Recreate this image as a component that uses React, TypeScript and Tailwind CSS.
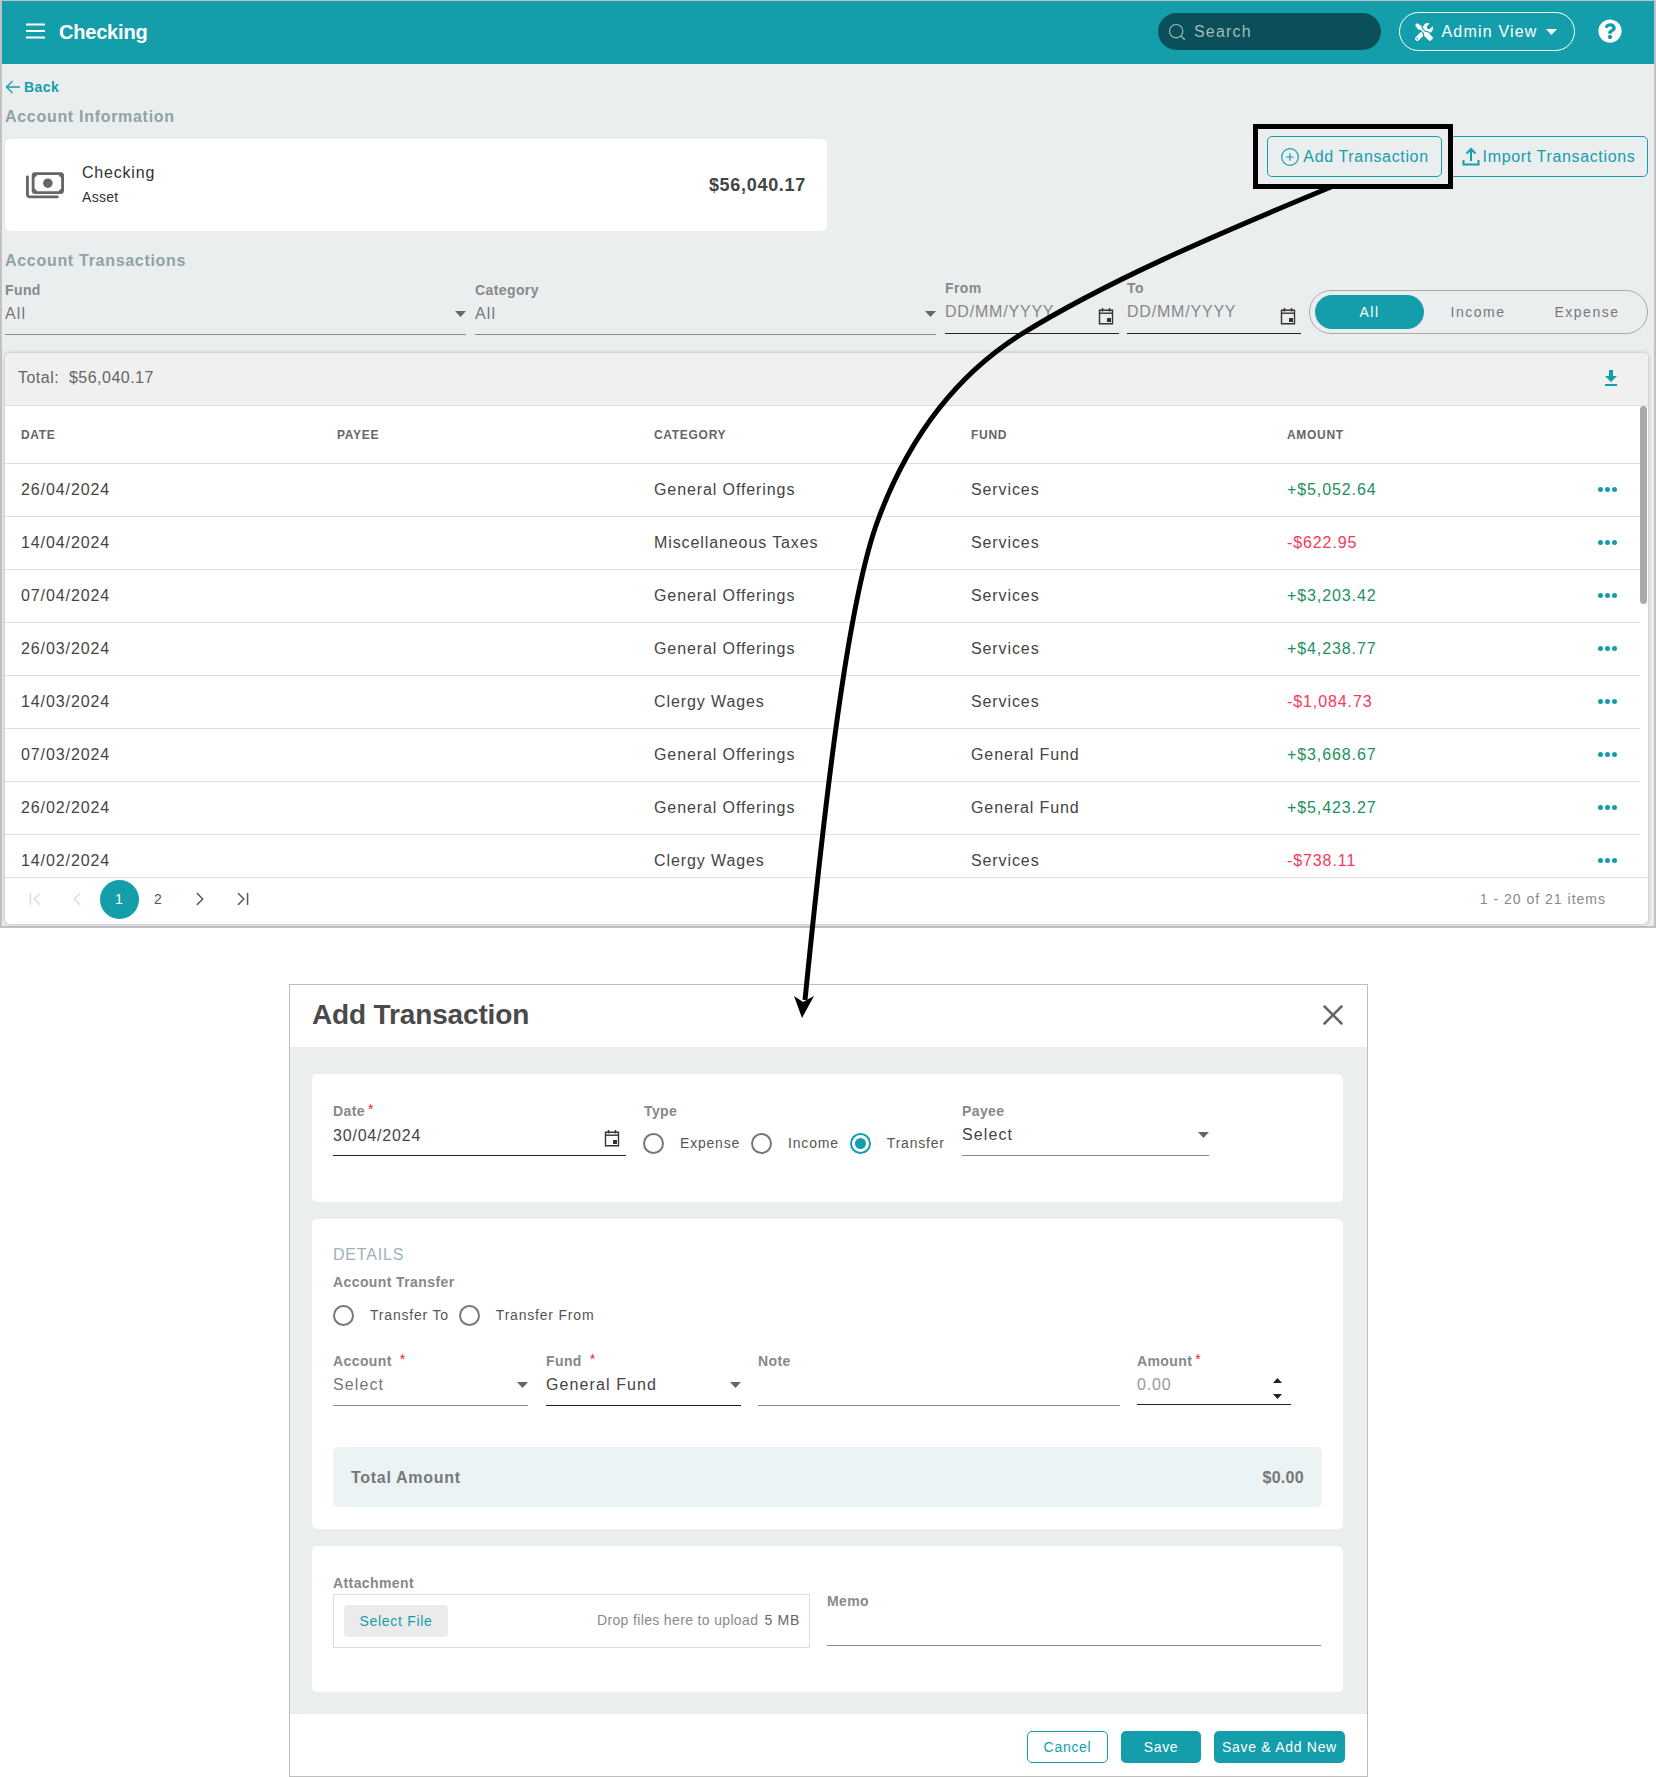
import type React from "react";
import { ChevronFirst, ChevronLast, ChevronLeft, ChevronRight, CirclePlus, Search, X } from "lucide-react";
import { FaQuestionCircle, FaTools } from "react-icons/fa";

interface Transaction {
  date: string;
  category: string;
  fund: string;
  amount: string;
}

const transactions: Transaction[] = [
  { date: "26/04/2024", category: "General Offerings", fund: "Services", amount: "+$5,052.64" },
  { date: "14/04/2024", category: "Miscellaneous Taxes", fund: "Services", amount: "-$622.95" },
  { date: "07/04/2024", category: "General Offerings", fund: "Services", amount: "+$3,203.42" },
  { date: "26/03/2024", category: "General Offerings", fund: "Services", amount: "+$4,238.77" },
  { date: "14/03/2024", category: "Clergy Wages", fund: "Services", amount: "-$1,084.73" },
  { date: "07/03/2024", category: "General Offerings", fund: "General Fund", amount: "+$3,668.67" },
  { date: "26/02/2024", category: "General Offerings", fund: "General Fund", amount: "+$5,423.27" },
  { date: "14/02/2024", category: "Clergy Wages", fund: "Services", amount: "-$738.11" },
];

function Caret({ className = "" }: { className?: string }) {
  return (
    <svg viewBox="0 0 11 6" className={`shrink-0 ${className || "h-[6px] w-[11px]"}`}>
      <path d="M0 0H11L5.5 6Z" fill="currentColor" />
    </svg>
  );
}

function CalendarIcon({ className = "" }: { className?: string }) {
  return (
    <svg width="16" height="18" viewBox="0 0 16 18" className={`shrink-0 text-[#333] ${className}`}>
      <path d="M1.500 3.200h13v13.600h-13z" fill="none" stroke="currentColor" strokeWidth="1.4" />
      <path d="M1 5.500h14v1.400H1z" fill="currentColor" />
      <path d="M4.500 1v3.500M11.500 1v3.500" stroke="currentColor" strokeWidth="1.5" />
      <path d="M9 11h4v4H9z" fill="currentColor" />
    </svg>
  );
}

function MoneyIcon() {
  return (
    <svg width="38" height="27" viewBox="0 0 40 28" className="shrink-0 text-[#666]">
      <path
        d="M9 1.500h28a2 2 0 0 1 1.500 1.500v17a2 2 0 0 1-1.500 1.500H9a2 2 0 0 1-1.500-1.500V3A2 2 0 0 1 9 1.500z"
        fill="none"
        stroke="currentColor"
        strokeWidth="3"
      />
      <path d="M7 1h5a5 5 0 0 1-5 5zM39 1h-5a5 5 0 0 0 5 5zM7 22h5a5 5 0 0 0-5-5zM39 22h-5a5 5 0 0 1 5-5z" fill="currentColor" />
      <circle cx="23" cy="11.500" r="5" fill="currentColor" />
      <path d="M1.500 5v18.500a2.500 2.500 0 0 0 2.500 2.500h29" fill="none" stroke="currentColor" strokeWidth="3" strokeLinecap="round" />
    </svg>
  );
}

function Label({ text, required, wide }: { text: string; required?: boolean; wide?: boolean }) {
  return (
    <div className="flex h-[20px] items-center text-[14px] font-bold tracking-[0.4px] text-[#888]">
      {text}
      {required && <span className={`text-[#e02b2b] ${wide ? "ml-[8px]" : "ml-[3px]"} -mt-[3px] font-normal`}>*</span>}
    </div>
  );
}

function SelectField({
  label,
  value,
  required,
  widthClass,
  muted,
  active,
}: {
  label: string;
  value: string;
  required?: boolean;
  widthClass: string;
  muted?: boolean;
  active?: boolean;
}) {
  return (
    <div className={`shrink-0 ${widthClass}`}>
      <Label text={label} required={required} wide={required} />
      <div
        className={`flex h-[35px] items-center justify-between border-b pb-[7px] text-[16px] tracking-[1.1px] ${
          active ? "border-[#222]" : "border-[#8a8a8a]"
        } ${muted ? "text-[#777]" : "text-[#444]"}`}
      >
        <span>{value}</span>
        <Caret className="h-[6px] w-[11px] text-[#666]" />
      </div>
    </div>
  );
}

function DateField({ label, widthClass }: { label: string; widthClass: string }) {
  return (
    <div className={`mb-[1px] shrink-0 ${widthClass}`}>
      <Label text={label} />
      <div className="flex h-[36px] items-center justify-between border-b border-[#222] pb-[7px] pr-[5px] text-[16px] tracking-[0.05em] text-[#888]">
        <span>DD/MM/YYYY</span>
        <CalendarIcon className="mt-[8px]" />
      </div>
    </div>
  );
}

function Radio({ label, checked }: { label: string; checked?: boolean }) {
  return (
    <div className="flex h-[21px] items-center">
      <span
        className={`flex h-[21px] w-[21px] items-center justify-center rounded-full border-2 ${
          checked ? "border-[#149eac]" : "border-[#777]"
        }`}
      >
        {checked && <span className="h-[11px] w-[11px] rounded-full bg-[#149eac]" />}
      </span>
      <span className="ml-[16px] text-[14px] tracking-[0.8px] text-[#555]">{label}</span>
    </div>
  );
}

function Dots() {
  return (
    <svg width="19" height="5" viewBox="0 0 19 5" className="-mt-[1px] text-[#149eac]">
      <circle cx="2.500" cy="2.500" r="2.500" fill="currentColor" />
      <circle cx="9.500" cy="2.500" r="2.500" fill="currentColor" />
      <circle cx="16.500" cy="2.500" r="2.500" fill="currentColor" />
    </svg>
  );
}

function TransactionRow({ item }: { item: Transaction }) {
  const negative = item.amount.startsWith("-");
  return (
    <div className="grid h-[53px] shrink-0 grid-cols-[316px_317px_317px_316px_1fr_auto] items-center border-b border-[#dedede] pl-[16px] pr-[23px] text-[16px] tracking-[0.9px] text-[#444]">
      <div>{item.date}</div>
      <div />
      <div>{item.category}</div>
      <div>{item.fund}</div>
      <div className={negative ? "text-[#f5395a]" : "text-[#22905c]"}>{item.amount}</div>
      <Dots />
    </div>
  );
}

function OutlineButton({ children, widthClass }: { children: React.ReactNode; widthClass: string }) {
  return (
    <div
      className={`flex h-[41px] items-center justify-center gap-[3px] rounded-[5px] border border-[#149eac] text-[16px] tracking-[0.65px] text-[#149eac] ${widthClass}`}
    >
      {children}
    </div>
  );
}

export default function App() {
  return (
    <div className="relative h-[1777px] w-[1656px] overflow-hidden bg-white font-['Liberation_Sans',Arial,sans-serif]">
      {/* account page */}
      <div className="h-[928px] border-x-2 border-b-2 border-t border-[#c4c0c4] bg-[#ebeeef]">
        <header className="flex h-[63px] items-center justify-between bg-[#149eac] pb-[2px] pl-[24px] pr-[32px] text-white">
          <div className="flex items-center gap-[14px]">
            <svg width="19" height="16" viewBox="0 0 19 16" className="-mt-[2px]">
              <path d="M0 1.500h19M0 8h19M0 14.500h19" stroke="#fff" strokeWidth="2" />
            </svg>
            <span className="text-[20px] font-bold tracking-[-0.2px]">Checking</span>
          </div>
          <div className="flex items-center">
            <div className="flex h-[37px] w-[223px] items-center gap-[7px] rounded-full bg-[#0a4f59] pl-[9px] text-[16px] tracking-[1.2px] text-[#a3bcbc]">
              <Search size={20} strokeWidth={1.4} />
              <span>Search</span>
            </div>
            <div className="ml-[18px] flex h-[39px] w-[176px] items-center justify-center gap-[8px] rounded-full border border-white text-[16px] tracking-[1.2px]">
              <FaTools size={18} className="-ml-[2px]" />
              <span>Admin View</span>
              <Caret />
            </div>
            <FaQuestionCircle size={24} className="-mt-[2px] ml-[23px]" />
          </div>
        </header>

        <div className="pl-[3px] pr-[6px]">
          <div className="mt-[13px] flex h-[20px] items-center text-[14px] font-bold tracking-[0.4px] text-[#149eac]">
            <svg width="16" height="14" viewBox="0 0 16 14" className="mr-[3px]">
              <path d="M15 7H1.500M7.500 1L1.500 7l6 6" fill="none" stroke="currentColor" strokeWidth="1.3" />
            </svg>
            Back
          </div>

          <div className="mt-[9px] flex justify-between">
            <div>
              <div className="flex h-[20px] items-center pt-[1px] text-[16px] font-bold tracking-[0.7px] text-[#8fa3a3]">
                Account Information
              </div>
              <div className="mt-[13px] flex h-[92px] w-[822px] items-center justify-between rounded-[5px] bg-white pl-[21px] pr-[21px]">
                <div className="flex items-center">
                  <MoneyIcon />
                  <div className="-mt-[1px] ml-[18px]">
                    <div className="text-[16px] leading-[20px] tracking-[0.05em] text-[#333]">Checking</div>
                    <div className="mt-[5px] text-[14px] leading-[18px] tracking-[0.3px] text-[#333]">Asset</div>
                  </div>
                </div>
                <div className="text-[18px] font-bold tracking-[0.7px] text-[#444]">$56,040.17</div>
              </div>
            </div>
            <div className="flex gap-[7px] pt-[30px]">
              <OutlineButton widthClass="w-[175px]">
                <CirclePlus size={20} strokeWidth={1.4} />
                Add Transaction
              </OutlineButton>
              <OutlineButton widthClass="w-[199px]">
                <svg width="18" height="19" viewBox="0 0 18 19" fill="none" stroke="currentColor" strokeWidth="2">
                  <path d="M9 14V2M4.500 6.500L9 2l4.500 4.500M1.500 13v4.500h15V13" />
                </svg>
                Import Transactions
              </OutlineButton>
            </div>
          </div>

          <div className="mt-[19px] flex h-[20px] items-center pt-[1px] text-[16px] font-bold tracking-[0.7px] text-[#8fa3a3]">
            Account Transactions
          </div>
          <div className="mt-[10px] flex h-[55px] items-end">
            <SelectField label="Fund" value="All" widthClass="w-[461px]" muted />
            <SelectField label="Category" value="All" widthClass="ml-[9px] w-[461px]" muted />
            <DateField label="From" widthClass="ml-[9px] w-[174px]" />
            <DateField label="To" widthClass="ml-[8px] w-[174px]" />
            <div className="mb-[1px] ml-[8px] flex h-[44px] w-[339px] items-center rounded-full border border-[#aaa] pl-[5px] text-[14px] tracking-[1.5px] text-[#777]">
              <div className="flex h-[34px] w-[109px] items-center justify-center rounded-full bg-[#149eac] text-white">
                All
              </div>
              <div className="w-[108px] text-center">Income</div>
              <div className="w-[110px] text-center">Expense</div>
            </div>
          </div>

          {/* transactions grid */}
          <div className="mt-[18px] h-[571px] w-[1643px] overflow-hidden rounded-[5px] bg-white shadow-[0_0_4px_rgba(0,0,0,0.25)]">
            <div className="flex h-[53px] items-center justify-between border-b border-[#dedede] bg-[#f0f0f0] pb-[2px] pl-[13px] pr-[30px] text-[16px] tracking-[0.03em] text-[#666]">
              <span>Total:&nbsp; $56,040.17</span>
              <svg width="14" height="16" viewBox="0 0 14 16" className="text-[#149eac]">
                <path d="M5 0h4v6h4L7 12 1 6h4zM1 14h12v2H1z" fill="currentColor" />
              </svg>
            </div>
            <div className="flex h-[471px]">
              <div className="flex w-[1635px] flex-col overflow-hidden">
                <div className="grid h-[58px] shrink-0 grid-cols-[316px_317px_317px_316px_1fr] items-center border-b border-[#dedede] pl-[16px] text-[12px] font-bold uppercase tracking-[0.7px] text-[#666]">
                  <div>Date</div>
                  <div>Payee</div>
                  <div>Category</div>
                  <div>Fund</div>
                  <div>Amount</div>
                </div>
                {transactions.map((item) => (
                  <TransactionRow key={item.date} item={item} />
                ))}
              </div>
              <div className="w-[8px] shrink-0">
                <div className="h-[198px] w-[7px] rounded-full bg-[#a9a9a9]" />
              </div>
            </div>
            <div className="flex h-[47px] items-center justify-between border-t border-[#dedede] pb-[4px] pr-[42px] text-[14px] tracking-[1px] text-[#8a8a8a]">
              <div className="flex items-center text-[#555]">
                <ChevronFirst size={22} strokeWidth={1.6} className="ml-[19px] text-[#ddd]" />
                <ChevronLeft size={22} strokeWidth={1.6} className="ml-[20px] text-[#ddd]" />
                <div className="ml-[12px] flex h-[39px] w-[39px] items-center justify-center rounded-full bg-[#149eac] text-white">
                  1
                </div>
                <div className="ml-[15px] w-[9px] text-center">2</div>
                <ChevronRight size={22} strokeWidth={1.6} className="ml-[26px]" />
                <ChevronLast size={22} strokeWidth={1.6} className="ml-[21px]" />
              </div>
              <span>1 - 20 of 21 items</span>
            </div>
          </div>
        </div>
      </div>

      {/* add transaction dialog */}
      <div className="ml-[289px] mt-[56px] h-[793px] w-[1079px] border border-[#bdbdbd]">
        <div className="flex h-[62px] items-center justify-between pb-[3px] pl-[22px] pr-[17px]">
          <span className="text-[28px] font-bold tracking-[-0.15px] text-[#4a4a4a]">Add Transaction</span>
          <X size={34} strokeWidth={1.8} className="text-[#666]" />
        </div>
        <div className="h-[667px] bg-[#ebeeef] pl-[22px] pr-[24px] pt-[27px]">
          <div className="flex h-[128px] rounded-[5px] bg-white pl-[21px] pt-[27px]">
            <div className="w-[293px] shrink-0">
              <Label text="Date" required />
              <div className="flex h-[35px] items-center justify-between border-b border-[#222] pb-[5px] pr-[6px] text-[16px] tracking-[0.05em] text-[#444]">
                <span>30/04/2024</span>
                <CalendarIcon className="mt-[4px]" />
              </div>
            </div>
            <div className="ml-[17px] w-[318px] shrink-0">
              <div className="ml-[1px]">
                <Label text="Type" />
              </div>
              <div className="mt-[12px] flex">
                <Radio label="Expense" />
                <div className="ml-[11px]">
                  <Radio label="Income" />
                </div>
                <div className="ml-[11px]">
                  <Radio label="Transfer" checked />
                </div>
              </div>
            </div>
            <SelectField label="Payee" value="Select" widthClass="ml-[1px] w-[247px]" />
          </div>

          <div className="mt-[17px] h-[310px] rounded-[5px] bg-white px-[21px] pt-[25px]">
            <div className="flex h-[20px] items-center pt-[1px] text-[16px] tracking-[0.05em] text-[#9db3b8]">DETAILS</div>
            <div className="mt-[8px]">
              <Label text="Account Transfer" />
            </div>
            <div className="mt-[13px] flex gap-[10px]">
              <Radio label="Transfer To" />
              <Radio label="Transfer From" />
            </div>
            <div className="mt-[25px] flex">
              <SelectField label="Account" value="Select" required widthClass="w-[195px]" muted />
              <SelectField label="Fund" value="General Fund" required widthClass="ml-[18px] w-[195px]" active />
              <div className="ml-[17px] w-[362px] shrink-0">
                <Label text="Note" />
                <div className="h-[35px] border-b border-[#8a8a8a]" />
              </div>
              <div className="ml-[17px] w-[154px] shrink-0">
                <Label text="Amount" required />
                <div className="flex h-[34px] items-center justify-between border-b border-[#222] pr-[9px] text-[16px] tracking-[0.05em] text-[#999]">
                  <span className="-mt-[6px]">0.00</span>
                  <div className="mt-[2px] flex flex-col gap-[11px] text-[#222]">
                    <Caret className="h-[5px] w-[9px] rotate-180" />
                    <Caret className="h-[5px] w-[9px]" />
                  </div>
                </div>
              </div>
            </div>
            <div className="mt-[41px] flex h-[60px] items-center justify-between rounded-[5px] bg-[#ecf3f5] px-[18px] pt-[1px] text-[16px] font-bold tracking-[0.7px] text-[#777]">
              <span>Total Amount</span>
              <span className="tracking-[0.3px]">$0.00</span>
            </div>
          </div>

          <div className="mt-[17px] flex h-[146px] gap-[17px] rounded-[5px] bg-white pl-[21px] pt-[27px]">
            <div className="w-[477px] shrink-0">
              <Label text="Attachment" />
              <div className="mt-px flex h-[54px] items-center justify-between border border-[#ddd] pl-[10px] pr-[9px] text-[14px] tracking-[0.05em] text-[#8a8a8a]">
                <div className="flex h-[32px] w-[104px] items-center justify-center rounded-[4px] bg-[#ebebeb] text-[#149eac]">
                  Select File
                </div>
                <span className="-mt-[2px] tracking-[0.35px]">
                  Drop files here to upload <span className="ml-[2px] tracking-[0.7px] text-[#666]">5 MB</span>
                </span>
              </div>
            </div>
            <div className="mt-[18px] w-[494px] shrink-0">
              <Label text="Memo" />
              <div className="h-[35px] border-b border-[#8a8a8a]" />
            </div>
          </div>
        </div>
        <div className="flex h-[62px] items-center justify-end gap-[13px] pr-[22px] pt-[4px] text-[14px] tracking-[0.05em]">
          <div className="flex h-[32px] w-[81px] items-center justify-center rounded-[5px] border border-[#149eac] text-[#149eac]">
            Cancel
          </div>
          <div className="flex h-[32px] w-[80px] items-center justify-center rounded-[5px] bg-[#149eac] text-white">
            Save
          </div>
          <div className="flex h-[32px] w-[131px] items-center justify-center rounded-[5px] bg-[#149eac] text-white">
            Save &amp; Add New
          </div>
        </div>
      </div>

      {/* annotation drawn over the screenshots */}
      <div className="absolute left-[1253px] top-[124px] h-[65px] w-[200px] border-[5px] border-black" />
      <svg width="1656" height="1777" viewBox="0 0 1656 1777" className="pointer-events-none absolute left-0 top-0">
        <path
          d="M1331 187C1215 235 1105 282 1020 335C965 370 912 428 878 520C848 600 825 800 805 1000"
          fill="none"
          stroke="#000"
          strokeWidth="5"
        />
        <path d="M802 1018L794 996L803 1002L814 996Z" fill="#000" />
      </svg>
    </div>
  );
}
